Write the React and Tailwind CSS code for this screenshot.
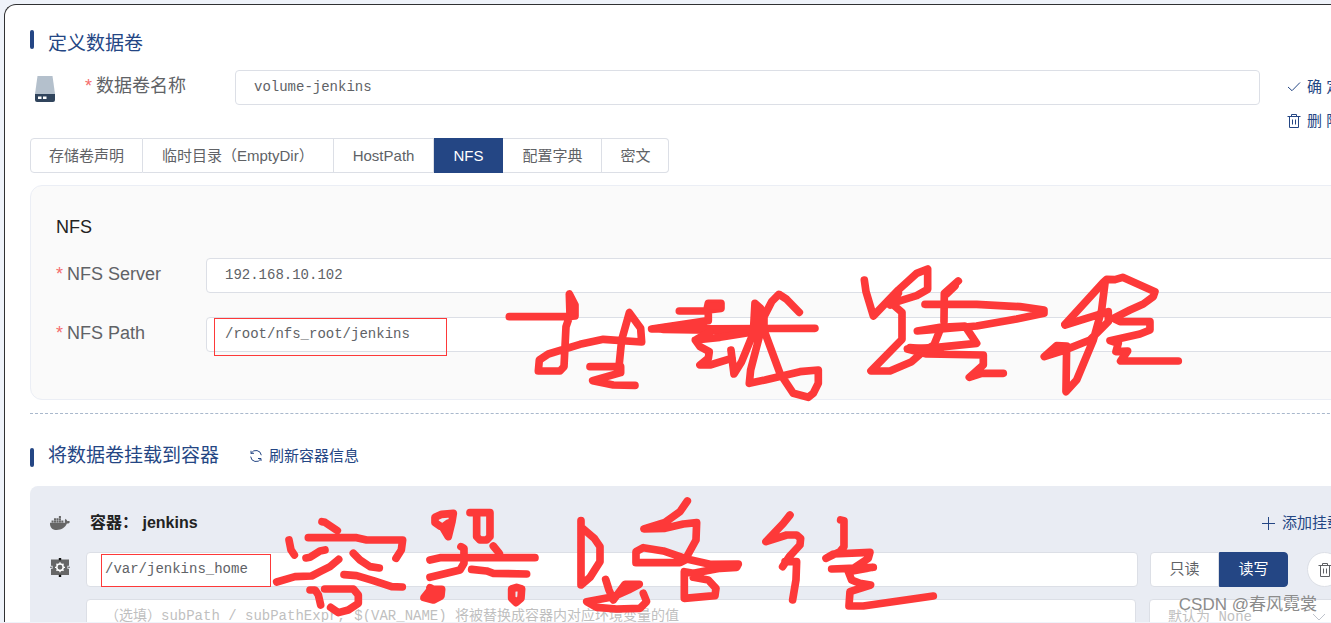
import React from "react";
import { FaDocker } from "react-icons/fa";

const volumeTypes = [
  "存储卷声明",
  "临时目录（EmptyDir）",
  "HostPath",
  "NFS",
  "配置字典",
  "密文",
];

const sans = "font-['Liberation_Sans','Noto_Sans_CJK_SC',sans-serif]";
const mono = "font-['Liberation_Mono','Noto_Sans_CJK_SC',monospace]";
const inputBase =
  "h-[35px] min-w-0 flex-1 rounded border border-[#dcdfe6] bg-white px-[18px] pb-[2px] text-sm leading-6 text-[#606266] placeholder-[#bfbfbf] outline-none";

const TrashIcon = () => (
  <svg width="14" height="14" viewBox="0 0 14 14" fill="none" stroke="currentColor" aria-hidden="true">
    <path d="M.5 2.5h13M4.5 2.5v-2h5v2M2.5 2.5v11h9v-11M5.5 5.5v5M8.5 5.5v5" />
  </svg>
);

const CheckIcon = () => (
  <svg width="14" height="14" viewBox="0 0 14 14" fill="none" stroke="currentColor" aria-hidden="true">
    <path d="M1 7l4 3.7L13 2.5" />
  </svg>
);

const PlusIcon = () => (
  <svg width="14" height="14" viewBox="0 0 14 14" fill="none" stroke="currentColor" aria-hidden="true">
    <path d="M6.5 1v13M0 7.5h13" />
  </svg>
);

const RefreshIcon = () => (
  <svg width="14" height="14" viewBox="0 0 14 14" fill="none" stroke="currentColor" aria-hidden="true">
    <path d="M2 4.8V1.8M2 4.3h3M2.3 4.1A5.4 5.4 0 0 1 12.3 6.2M12 12V9.5H9M11.8 9.8A5.4 5.4 0 0 1 1.7 7.6" />
  </svg>
);

const DiskIcon = () => (
  <svg width="20" height="26" viewBox="0 0 20 26" aria-hidden="true">
    <path d="M2.5 0h15L20 18H0z" fill="#b4c0cc" />
    <path d="M0 18h20v6a2 2 0 0 1-2 2H2a2 2 0 0 1-2-2z" fill="#30445c" />
    <path d="M3 20.5h3.5v2.5H3zM8 20.5h3.5v2.5H8z" fill="#fff" />
  </svg>
);

const MountIcon = () => (
  <svg width="20" height="19" viewBox="0 0 20 19" aria-hidden="true">
    <path d="M1 1.5h18v6.3h-1.6v3H19V17H1v-6.2h1.6v-3H1z" fill="#666" />
    <path d="M8.8 0h2.4v2.2H8.8zM8.8 16.8h2.4V19H8.8z" fill="#111" />
    <path d="M0 8.8h2v1H0zM18 8.8h2v1h-2z" fill="#666" />
    <g stroke="#fff" fill="none">
      <circle cx="10" cy="9.3" r="3.2" strokeWidth="1.5" />
      <path d="M10 4.3v1.8M10 12.5v1.8M5 9.3h1.8M13.2 9.3H15M6.5 5.8l1.2 1.2M12.3 11.6l1.2 1.2M6.5 12.8l1.2-1.2M12.3 7l1.2-1.2" strokeWidth="1.3" />
    </g>
  </svg>
);

const SectionTitle = ({ children, barClass }) => (
  <h2 className="flex text-[19px] leading-[30px] text-[#244684]">
    <span className={`mr-[14px] h-[19px] w-1 rounded-xs bg-[#244684] ${barClass}`} />
    {children}
  </h2>
);

const Required = () => <span className="mr-1 text-[#f56c6c]">*</span>;

const NfsField = ({ id, label, value }) => (
  <div className="flex">
    <label htmlFor={id} className="flex w-[150px] text-lg leading-8 text-[#606266]">
      <Required />
      {label}
    </label>
    <input id={id} defaultValue={value} className={`${inputBase} ${mono}`} />
  </div>
);

// Freehand marker notes on top of the form
const Annotations = () => (
  <svg
    width="1331"
    height="623"
    viewBox="0 0 1331 623"
    className="pointer-events-none absolute top-0 left-0"
    fill="none"
    stroke="#fd3939"
    aria-hidden="true"
  >
    <rect x="214.5" y="318.5" width="232" height="37" />
    <rect x="101.5" y="554.5" width="169" height="32" />
    <g strokeWidth="23" strokeLinecap="round" strokeLinejoin="round">
      <g transform="translate(490 250) scale(.3333)">
        <path d="M58 200H230L255 198V165L238 132L240 195L228 230L222 350L210 363H145L148 330L175 312L270 283L340 268L455 276L452 235L418 188L395 270L388 340" />
        <path d="M243 150L248 190" />
        <path d="M300 350H392V368L308 392L370 405L435 406" />
        <path d="M568 183H650L655 160H693V175L655 180V212L485 237L975 235" />
        <path d="M510 235L640 218M520 238L800 243M660 168H690" />
        <path d="M775 248L690 262L616 270L630 290L658 305L655 325L630 345H660L725 325M620 268L660 245" />
        <path d="M723 300L732 372L755 335L790 250L795 160L812 175L808 260L782 360L778 400L825 390L930 365L985 360V400L970 430L955 442L910 430L870 370L822 240V200L845 155L867 133L890 148L928 187" />
      </g>
      <g transform="translate(830 250) scale(.3333)">
        <path d="M103 90L108 125L130 198L205 120L260 70L293 57V118L260 137L185 160L216 187V268L123 363H180L245 335L285 300L312 285L332 235M342 215L343 130L385 93M350 132L375 108M180 165L205 130" />
        <path d="M285 163H440L570 170L642 180V190L560 207L440 228L262 243L330 232L405 228L440 280L320 292L232 297L290 312L460 315V345L418 382L455 370H520" />
        <path d="M240 293L330 300" />
        <path d="M705 223L820 97L830 88L855 89L878 82L975 125L970 140L940 162L900 180L850 205L870 215H960V240L930 252L840 272L865 280L858 305L893 303L872 333H1045" />
        <path d="M825 100L815 180L790 270L740 390L708 425L710 288L680 287L643 320L700 302L780 270L835 215V185L705 225" />
      </g>
      <g transform="translate(260 490) scale(.3333)">
        <path d="M186 95L195 97L232 122" />
        <path d="M145 143H290L320 150H428L424 180L408 205" />
        <path d="M87 150L93 180L103 195" />
        <path d="M138 204L150 202L180 183L195 180" />
        <path d="M50 276L105 260L155 258L180 245L210 230L236 208" />
        <path d="M280 190L300 210L330 230L358 234" />
        <path d="M252 254L290 257L340 272L395 290L427 291" />
        <path d="M150 300H165L175 315L182 345" />
        <path d="M194 297H280L295 315V340L265 360L235 368L212 352" />
        <path d="M540 108L525 98V82L545 73L580 70L576 95L565 140L548 112L564 100" />
        <path d="M630 68H690V140L680 150H660L650 140V72" />
        <path d="M603 170L612 175V220L600 240L560 250L510 262" />
        <path d="M700 168L718 190" />
        <path d="M510 210L540 203H825" />
        <path d="M635 238L680 243L700 250L800 252" />
        <path d="M510 293L520 298H545L543 318L520 330L492 323L510 300L530 315" />
        <path d="M770 292L755 297V325L768 338L783 325L785 297Z" />
      </g>
      <g transform="translate(550 490) scale(.3333)">
        <path d="M93 92V285L120 262L150 215V170L133 145L98 115" />
        <path d="M167 268L177 300L190 330L225 283H268L235 300L190 320L110 335L140 352L200 357L270 355L290 335L280 310M215 300L250 288" />
        <path d="M412 33L390 65L345 97L282 117L345 115L400 102L440 98L438 150L405 210L390 218H258V185L280 173L340 183L410 207L480 223L565 222L560 232L510 235L430 250L403 245V325L495 317L498 295L475 270L430 262" />
        <path d="M720 75L700 100L648 155L710 135H740L752 145L750 165L718 200L698 230M705 215H740L738 270L728 330" />
        <path d="M872 90L882 92V170L870 185L828 205L850 192L960 187L955 205L910 235L845 237L970 232L895 245L905 270L930 280L962 285L900 305L897 348H940L1150 318" />
      </g>
    </g>
  </svg>
);

const App = () => {
  const [volumeType, setVolumeType] = React.useState("NFS");
  const [readOnly, setReadOnly] = React.useState(false);

  return (
    <div className={`relative flex h-screen flex-col overflow-hidden bg-[#eff3fa] pt-1 pb-px pl-1 ${sans}`}>
      <main className="-mr-20 min-h-0 flex-1 overflow-hidden rounded-tl-xl border-t border-l border-[#303133] bg-white pt-6 pr-[26px] pl-[25px]">
        <SectionTitle barClass="mt-px">定义数据卷</SectionTitle>

        <div className="mt-[11px] flex items-start">
          <div className="w-[55px] pt-[6px] pl-[5px]">
            <DiskIcon />
          </div>
          <label htmlFor="volume-name" className="flex w-[150px] text-lg leading-8 text-[#606266]">
            <Required />
            数据卷名称
          </label>
          <input id="volume-name" defaultValue="volume-jenkins" className={`${inputBase} ${mono}`} />
          <div className="ml-[27px] flex w-[98px] flex-col items-start text-[15px] text-[#244684]">
            <button className="flex h-[34px] items-center gap-[6px] whitespace-nowrap">
              <CheckIcon />确 定
            </button>
            <button className="flex h-[34px] items-center gap-[6px] whitespace-nowrap">
              <TrashIcon />删 除
            </button>
          </div>
        </div>

        <div className="flex text-[15px]">
          {volumeTypes.map((type) => (
            <button
              key={type}
              onClick={() => setVolumeType(type)}
              className={`h-[35px] border-y border-r px-[19px] pt-[2px] whitespace-nowrap first:rounded-l first:border-l first:px-[18px] last:rounded-r last:px-[18px] ${
                volumeType === type
                  ? "border-[#244684] bg-[#244684] text-white"
                  : "border-[#dcdfe6] bg-white text-[#606266]"
              }`}
            >
              {type}
            </button>
          ))}
        </div>

        <section className="mt-3 rounded-xl border border-[#ebeef5] bg-[#fafafa] pt-[29px] pb-[47px] pl-[25px]">
          <h3 className="text-lg leading-6 text-[#222]">NFS</h3>
          <div className="mt-[19px] flex flex-col gap-6">
            <NfsField id="nfs-server" label="NFS Server" value="192.168.10.102" />
            <NfsField id="nfs-path" label="NFS Path" value="/root/nfs_root/jenkins" />
          </div>
        </section>

        <hr className="mt-[13px] border-dashed border-[#a9b8cc]" />

        <div className="mt-[27px] flex items-center">
          <SectionTitle barClass="mt-[7px]">将数据卷挂载到容器</SectionTitle>
          <button className="ml-[30px] flex items-center gap-[6px] text-[15px] text-[#244684]">
            <RefreshIcon />
            刷新容器信息
          </button>
        </div>

        <section className="mt-[15px] rounded-lg bg-[#e9ecf3] pt-[25px] pr-[43px] pb-6 pl-5">
          <div className="flex h-6 items-center">
            <FaDocker className="h-5 w-5 text-[#666]" />
            <h3 className="ml-5 text-base font-bold text-[#222]">容器： jenkins</h3>
            <button className="ml-auto flex items-center gap-[6px] text-[15px] text-[#244684]">
              <PlusIcon />
              添加挂载
            </button>
          </div>

          <div className="mt-[17px] flex">
            <div className="w-9 pt-[6px]">
              <MountIcon />
            </div>
            <input aria-label="挂载路径" defaultValue="/var/jenkins_home" className={`${inputBase} ${mono}`} />
            <div className="ml-3 flex w-[138px] text-[15px]">
              <button
                onClick={() => setReadOnly(true)}
                className={`h-[35px] flex-1 rounded-l border ${
                  readOnly ? "border-[#244684] bg-[#244684] text-white" : "border-[#dcdfe6] bg-white text-[#606266]"
                }`}
              >
                只读
              </button>
              <button
                onClick={() => setReadOnly(false)}
                className={`h-[35px] flex-1 rounded-r border ${
                  readOnly ? "border-[#dcdfe6] bg-white text-[#606266]" : "border-[#244684] bg-[#244684] text-white"
                }`}
              >
                读写
              </button>
            </div>
            <button
              aria-label="删除"
              className="ml-[19px] flex h-[35px] w-[35px] items-center justify-center rounded-full border border-[#dcdfe6] bg-white text-[#606266]"
            >
              <TrashIcon />
            </button>
          </div>

          <div className="mt-3 flex pl-9">
            <input
              aria-label="subPath"
              placeholder="（选填）subPath / subPathExpr, $(VAR_NAME) 将被替换成容器内对应环境变量的值"
              className={`${inputBase} ${mono}`}
            />
            <div className="relative ml-[13px] w-[193px]">
              <select
                aria-label="mountPropagation"
                className={`h-[35px] w-full appearance-none rounded border border-[#dcdfe6] bg-white px-[18px] text-sm text-[#bfbfbf] ${mono}`}
              >
                <option>默认为 None</option>
              </select>
              <svg
                className="absolute top-[14px] right-4 text-[#bfc3cc]"
                width="14"
                height="8"
                viewBox="0 0 14 8"
                fill="none"
                stroke="currentColor"
                aria-hidden="true"
              >
                <path d="M1 1l6 6 6-6" />
              </svg>
            </div>
          </div>
        </section>
      </main>

      <Annotations />
      <span className="absolute right-[14px] bottom-[6px] text-[17px] leading-6 text-[#8c8c8c]">CSDN @春风霓裳</span>
    </div>
  );
};

export default App;
